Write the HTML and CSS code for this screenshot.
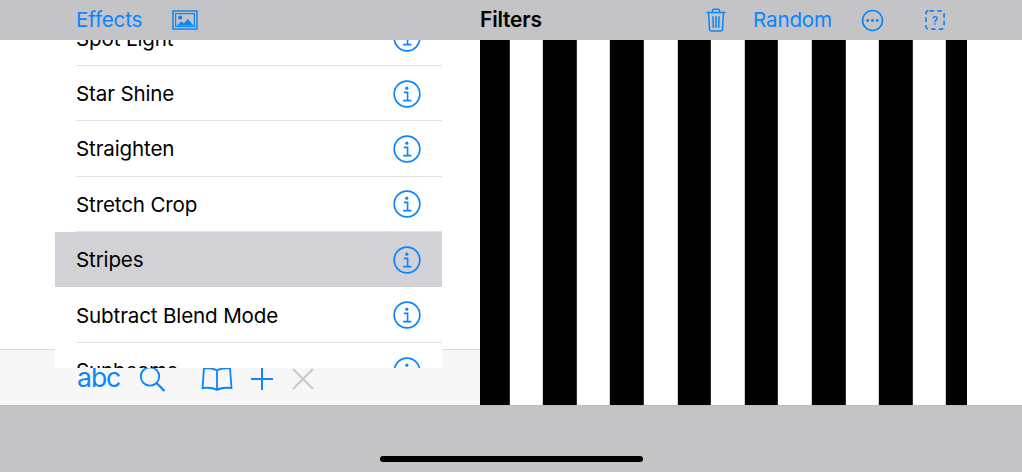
FILE: index.html
```html
<!DOCTYPE html>
<html lang="en">
<head>
  <meta charset="UTF-8" />
  <meta name="viewport" content="width=device-width, initial-scale=1.0" />
  <title>Filters</title>
  <link rel="stylesheet" href="styles.css">
</head>
<body>
  <svg class="sprite" width="0" height="0">
    <symbol id="info" viewBox="0 0 28 28">
      <circle cx="14" cy="14" r="12.800" fill="none" stroke="currentColor" stroke-width="1.700" />
      <circle cx="13.800" cy="8.200" r="1.600" fill="currentColor" />
      <path d="M10.800 12.400h3.800v8.200M10.200 20.600h8.200" fill="none" stroke="currentColor" stroke-width="1.600" />
    </symbol>
  </svg>

  <header class="topbar">
    <div class="top-left">
      <a class="link">Effects</a>
      <svg class="icon-photo" viewBox="0 0 26 20" width="26" height="20">
        <rect x="1" y="1" width="24" height="18" fill="none" stroke="currentColor" stroke-width="1.500" />
        <rect x="3.600" y="3.600" width="18.800" height="12.800" fill="none" stroke="currentColor" stroke-width="1.200" />
        <circle cx="8.200" cy="7.600" r="2.100" fill="currentColor" />
        <path d="M4.500 15.600l5-4 2.400 1.700 4-4.300 5.600 6.600z" fill="currentColor" />
      </svg>
    </div>
    <div class="top-right">
      <strong class="title">Filters</strong>
      <div class="actions">
        <svg class="icon-trash" viewBox="0 0 20 24" width="20" height="24" fill="none" stroke="currentColor" stroke-width="1.500">
          <path d="M0.500 4.600h19M6.400 4.400V2.900q0-1.600 1.600-1.600h4q1.600 0 1.600 1.600v1.500" />
          <path d="M2.500 4.800l1 16.400q.1 1.800 1.900 1.800h9.200q1.800 0 1.900-1.800l1-16.400" />
          <path d="M6.900 8.200l.4 11.500M10 8.200v11.500M13.100 8.200l-.4 11.500" />
        </svg>
        <a class="link">Random</a>
        <svg class="icon-more" viewBox="0 0 24 24" width="23" height="23">
          <circle cx="12" cy="12" r="10.400" fill="none" stroke="currentColor" stroke-width="1.700" />
          <circle cx="7" cy="12" r="1.500" fill="currentColor" />
          <circle cx="12" cy="12" r="1.500" fill="currentColor" />
          <circle cx="17" cy="12" r="1.500" fill="currentColor" />
        </svg>
        <svg class="icon-help" viewBox="0 0 22 22" width="20" height="20">
          <rect x="1" y="1" width="20" height="20" rx="3" fill="none" stroke="currentColor" stroke-width="1.900" stroke-dasharray="5 3.500" stroke-dashoffset="-1" />
          <text x="11" y="16" text-anchor="middle" class="help-mark">?</text>
        </svg>
      </div>
    </div>
  </header>

  <div class="content">
    <section class="left">
      <div class="list">
        <ul class="rows">
          <li class="row"><span>Spot Light</span><svg class="info"><use href="#info" /></svg></li>
          <li class="row"><span>Star Shine</span><svg class="info"><use href="#info" /></svg></li>
          <li class="row"><span>Straighten</span><svg class="info"><use href="#info" /></svg></li>
          <li class="row"><span>Stretch Crop</span><svg class="info"><use href="#info" /></svg></li>
          <li class="row selected"><span>Stripes</span><svg class="info"><use href="#info" /></svg></li>
          <li class="row"><span>Subtract Blend Mode</span><svg class="info"><use href="#info" /></svg></li>
          <li class="row"><span>Sunbeams</span><svg class="info"><use href="#info" /></svg></li>
        </ul>
      </div>
      <div class="toolbar">
        <span class="abc">abc</span>
        <svg class="icon-search" viewBox="0 0 28 26" width="28" height="26" fill="none" stroke="currentColor">
          <circle cx="11" cy="10.500" r="9.200" stroke-width="1.800" />
          <path d="M17.500 17l8 8" stroke-width="2.300" />
        </svg>
        <svg class="icon-book" viewBox="0 0 32 24" width="32" height="24" fill="none" stroke="currentColor" stroke-width="1.800">
          <path d="M16 3.500Q12 1 3 1L1.500 21Q11 20 16 23Q21 20 30.500 21L29 1Q20 1 16 3.500V22" />
        </svg>
        <svg class="icon-plus" viewBox="0 0 22 22" width="22" height="22" fill="none" stroke="currentColor" stroke-width="2">
          <path d="M11 0v22M0 11h22" />
        </svg>
        <svg class="icon-close" viewBox="0 0 22 22" width="22" height="22" fill="none" stroke="currentColor" stroke-width="2">
          <path d="M1 1l20 20M21 1L1 21" />
        </svg>
      </div>
    </section>
    <section class="right">
      <div class="stripes"></div>
    </section>
  </div>

  <footer class="bottom">
    <div class="home-bar"></div>
  </footer>
</body>
</html>
```

FILE: styles.css
```css
:root {
  --blue: #0a84ff;
  --bar: #c4c4c6;
  --line: #e2e2e4;
}

* { box-sizing: border-box; }

html, body { height: 100%; }

body {
  margin: 0;
  display: flex;
  flex-direction: column;
  overflow: hidden;
  background: #fff;
  color: #000;
  font-family: Inter, "Liberation Sans", sans-serif;
}

.sprite { display: block; }

.topbar {
  height: 40px;
  flex: none;
  display: flex;
  background: var(--bar);
  color: var(--blue);
  position: relative;
  z-index: 2;
}

.top-left {
  width: 480px;
  padding-left: 76px;
  display: flex;
  align-items: center;
  gap: 30px;
}

.top-right {
  flex: 1;
  padding-right: 77px;
  display: flex;
  align-items: center;
  justify-content: space-between;
}

.link { font-size: 20.700px; letter-spacing: -0.2px; margin-top: -2px; }

.title { font-size: 21px; font-weight: 600; color: #000; letter-spacing: -0.2px; margin-top: -2px; }

.actions {
  display: flex;
  align-items: center;
}

.icon-trash + .link { margin-left: 27px; }
.link + .icon-more { margin-left: 29px; }
.icon-help { margin-left: 41px; }

.help-mark {
  font-family: Inter, sans-serif;
  font-size: 13px;
  font-weight: 600;
  fill: currentColor;
}

.content {
  height: 365px;
  flex: none;
  display: flex;
}

.left {
  width: 480px;
  display: flex;
  flex-direction: column;
}

.list {
  height: 328px;
  flex: none;
  margin-left: 55px;
  width: 387px;
  overflow: hidden;
  background: #fff;
  position: relative;
  z-index: 1;
}

.rows {
  list-style: none;
  margin: -29.500px 0 0 0;
  padding: 0;
}

.row {
  height: 55.400px;
  padding: 0 21px;
  display: flex;
  align-items: center;
  justify-content: space-between;
  font-size: 20.600px;
  letter-spacing: -0.15px;
  position: relative;
}

.row::after {
  content: "";
  position: absolute;
  left: 21px;
  right: 0;
  bottom: 0;
  height: 1px;
  background: var(--line);
}

.row.selected { background: #d1d1d6; }
.row.selected::after { display: none; }

.info {
  width: 28px;
  height: 28px;
  color: var(--blue);
}

.toolbar {
  flex: 1;
  margin-top: -19px;
  padding: 19px 0 0 77px;
  display: flex;
  align-items: center;
  background: #f7f7f7;
  border-top: 1px solid #dcdcde;
  color: var(--blue);
}

.abc { font-size: 26.500px; letter-spacing: -1px; line-height: 1; margin-top: -20px; }

.icon-search { margin: -17px 0 0 19px; }
.icon-book { margin: -17px 0 0 34px; }
.icon-plus { margin: -17px 0 0 18px; }
.icon-close { margin: -17px 0 0 19px; color: #c7c7c9; }

.right {
  flex: 1;
  display: flex;
  padding-right: 55px;
  background: #fff;
}

.stripes {
  flex: 1;
  background-image: repeating-linear-gradient(90deg, #000 0, #000 33.600px, #fff 33.600px, #fff 67.200px);
  background-position: -4.200px 0;
}

.bottom {
  flex: 1;
  background: var(--bar);
  border-top: 1px solid #bcbcbe;
  display: flex;
  justify-content: center;
  align-items: flex-end;
  padding-bottom: 10px;
}

.home-bar {
  width: 263px;
  height: 6px;
  border-radius: 3px;
  background: #000;
}
```
